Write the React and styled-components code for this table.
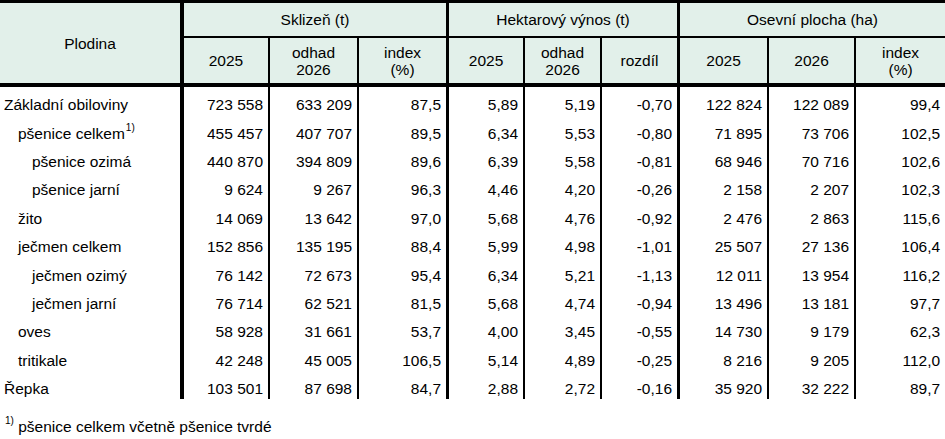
import React from "react";
import styled, { createGlobalStyle } from "styled-components";

const GlobalStyle = createGlobalStyle`
  body {
    margin: 0;
    background: #ffffff;
    font-family: "Liberation Sans", Arial, sans-serif;
    color: #000000;
  }
`;

const Page = styled.div`
  width: 945px;
`;

const Table = styled.table`
  width: 945px;
  table-layout: fixed;
  border-collapse: separate;
  border-spacing: 0;
  border-top: 3px solid #000;
  font-size: 15.5px;
`;

const HeadRow = styled.tr`
  height: ${(p) => p.h}px;
`;

const HeadCell = styled.th`
  background: #e2f0ea;
  font-weight: normal;
  text-align: center;
  vertical-align: middle;
  padding: 0 2px;
  line-height: 17px;
  border-right: ${(p) => p.right || 0}px solid #000;
  border-bottom: ${(p) => p.bottom || 0}px solid #000;
`;

const Row = styled.tr`
  height: 28.4px;
`;

const NameCell = styled.td`
  text-align: left;
  white-space: nowrap;
  padding: 8px 0 0 ${(p) => 4 + p.level * 14}px;
  border-right: 4px solid #000;
`;

const NumCell = styled.td`
  text-align: right;
  white-space: nowrap;
  padding: 8px 5px 0 0;
  border-right: ${(p) => p.right || 0}px solid #000;
`;

const Sup = styled.sup`
  font-size: 10px;
  vertical-align: top;
  position: relative;
  top: -3px;
  margin-left: 1px;
`;

const Footnote = styled.div`
  margin-top: 19px;
  padding-left: 4px;
  font-size: 15.5px;
`;

const widths = [184, 86, 89, 90, 76, 77, 78, 89, 87, 89];
const rights = [2, 2, 3, 2, 2, 3, 2, 2, 0];

const rows = [
  ["Základní obiloviny", 0, false, "723 558", "633 209", "87,5", "5,89", "5,19", "-0,70", "122 824", "122 089", "99,4"],
  ["pšenice celkem", 1, true, "455 457", "407 707", "89,5", "6,34", "5,53", "-0,80", "71 895", "73 706", "102,5"],
  ["pšenice ozimá", 2, false, "440 870", "394 809", "89,6", "6,39", "5,58", "-0,81", "68 946", "70 716", "102,6"],
  ["pšenice jarní", 2, false, "9 624", "9 267", "96,3", "4,46", "4,20", "-0,26", "2 158", "2 207", "102,3"],
  ["žito", 1, false, "14 069", "13 642", "97,0", "5,68", "4,76", "-0,92", "2 476", "2 863", "115,6"],
  ["ječmen celkem", 1, false, "152 856", "135 195", "88,4", "5,99", "4,98", "-1,01", "25 507", "27 136", "106,4"],
  ["ječmen ozimý", 2, false, "76 142", "72 673", "95,4", "6,34", "5,21", "-1,13", "12 011", "13 954", "116,2"],
  ["ječmen jarní", 2, false, "76 714", "62 521", "81,5", "5,68", "4,74", "-0,94", "13 496", "13 181", "97,7"],
  ["oves", 1, false, "58 928", "31 661", "53,7", "4,00", "3,45", "-0,55", "14 730", "9 179", "62,3"],
  ["tritikale", 1, false, "42 248", "45 005", "106,5", "5,14", "4,89", "-0,25", "8 216", "9 205", "112,0"],
  ["Řepka", 0, false, "103 501", "87 698", "84,7", "2,88", "2,72", "-0,16", "35 920", "32 222", "89,7"],
];

const groups = [
  { title: "Sklizeň (t)", right: 3, subs: ["2025", ["odhad", "2026"], ["index", "(%)"]] },
  { title: "Hektarový výnos (t)", right: 3, subs: ["2025", ["odhad", "2026"], "rozdíl"] },
  { title: "Osevní plocha (ha)", right: 0, subs: ["2025", "2026", ["index", "(%)"]] },
];

const HeadText = ({ value }) =>
  Array.isArray(value) ? (
    <>
      {value[0]}
      <br />
      {value[1]}
    </>
  ) : (
    value
  );

export default function App() {
  return (
    <Page>
      <GlobalStyle />
      <Table>
        <colgroup>
          {widths.map((w, i) => (
            <col key={i} style={{ width: w }} />
          ))}
        </colgroup>
        <thead>
          <HeadRow h={35}>
            <HeadCell rowSpan={2} right={4} bottom={4}>
              Plodina
            </HeadCell>
            {groups.map((g) => (
              <HeadCell key={g.title} colSpan={3} right={g.right} bottom={2}>
                {g.title}
              </HeadCell>
            ))}
          </HeadRow>
          <HeadRow h={49}>
            {groups.flatMap((g, gi) =>
              g.subs.map((s, si) => (
                <HeadCell key={gi + "-" + si} right={rights[gi * 3 + si]} bottom={4}>
                  <HeadText value={s} />
                </HeadCell>
              ))
            )}
          </HeadRow>
        </thead>
        <tbody>
          {rows.map(([name, level, note, ...vals]) => (
            <Row key={name}>
              <NameCell level={level}>
                {name}
                {note && <Sup>1)</Sup>}
              </NameCell>
              {vals.map((v, i) => (
                <NumCell key={i} right={rights[i]}>
                  {v}
                </NumCell>
              ))}
            </Row>
          ))}
        </tbody>
      </Table>
      <Footnote>
        <Sup>1)</Sup> pšenice celkem včetně pšenice tvrdé
      </Footnote>
    </Page>
  );
}
